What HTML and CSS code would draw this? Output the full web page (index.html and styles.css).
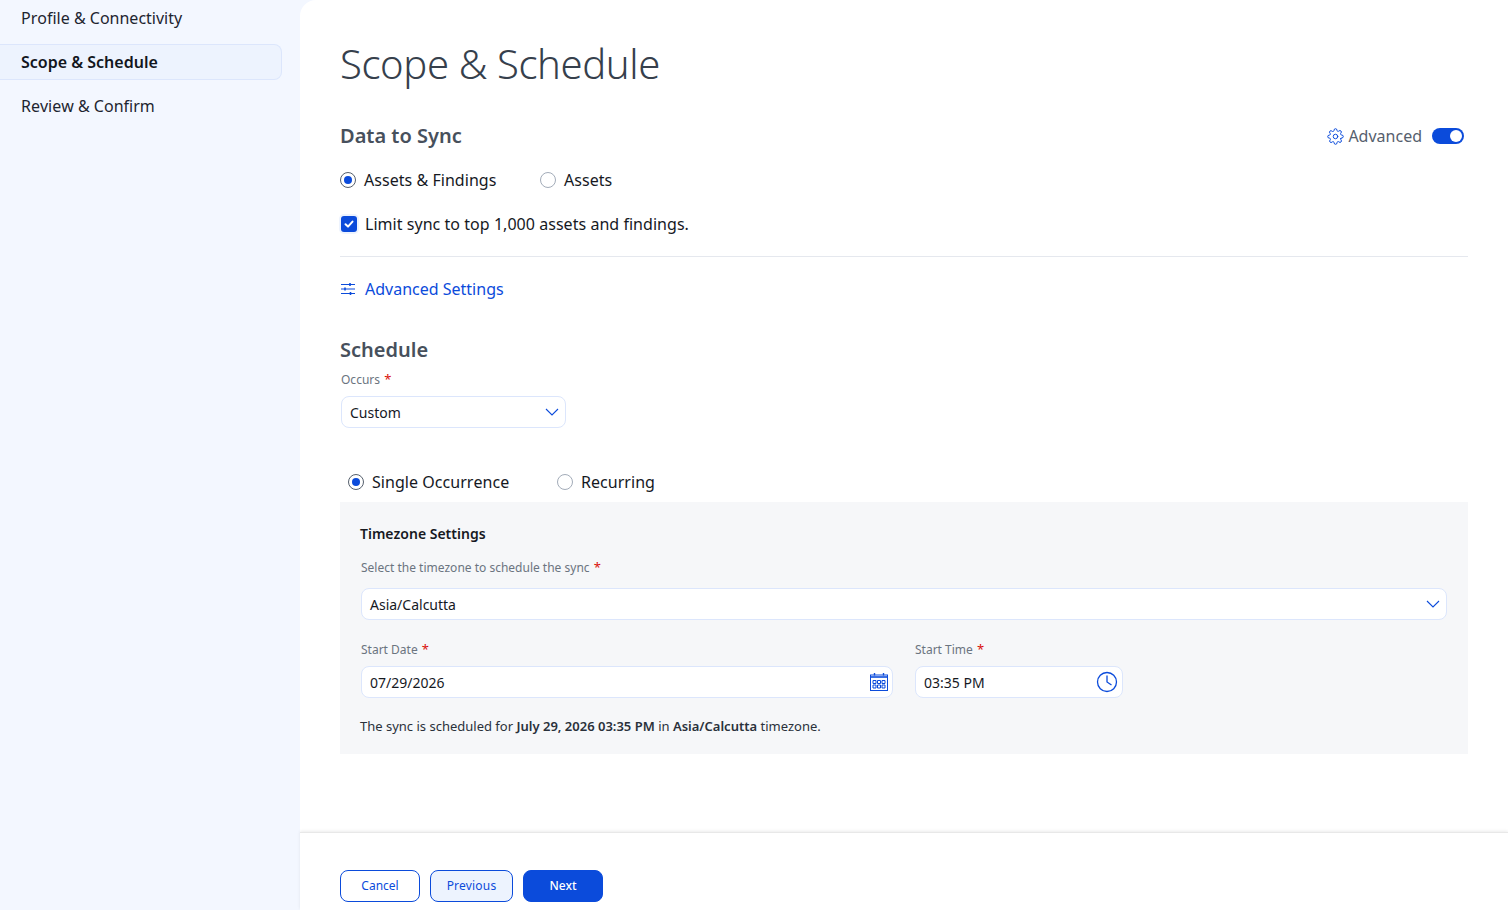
FILE: index.html
```html
<!DOCTYPE html>
<html lang="en">
<head>
    <meta charset="UTF-8">
    <meta name="viewport" content="width=device-width, initial-scale=1.0">
    <title>Scope &amp; Schedule</title>
    <link rel="stylesheet" href="styles.css">
</head>
<body>
    <div class="layout">
        <nav class="sidebar">
            <a class="step">Profile &amp; Connectivity</a>
            <a class="step active">Scope &amp; Schedule</a>
            <a class="step">Review &amp; Confirm</a>
        </nav>
        <main class="main">
            <div class="content">
                <h1>Scope &amp; Schedule</h1>

                <div class="section-head">
                    <h2>Data to Sync</h2>
                    <div class="advanced">
                        <svg class="gear" width="17" height="17" viewBox="0 0 24 24" fill="none" stroke="#0b4bdb" stroke-width="1.4" stroke-linecap="round" stroke-linejoin="round">
                            <circle cx="12" cy="12" r="3.2"></circle>
                            <path d="M19.4 15a1.65 1.65 0 0 0 .33 1.82l.06.06a2 2 0 1 1-2.83 2.83l-.06-.06a1.65 1.65 0 0 0-2.8 1.17V21a2 2 0 1 1-4 0v-.09a1.65 1.65 0 0 0-2.88-1.11l-.06.06a2 2 0 1 1-2.83-2.83l.06-.06a1.65 1.65 0 0 0-1.17-2.8H3a2 2 0 1 1 0-4h.09a1.65 1.65 0 0 0 1.11-2.88l-.06-.06a2 2 0 1 1 2.83-2.83l.06.06a1.65 1.65 0 0 0 1.82.33H9a1.65 1.65 0 0 0 1-1.51V3a2 2 0 1 1 4 0v.09a1.65 1.65 0 0 0 2.8 1.17l.06-.06a2 2 0 1 1 2.83 2.83l-.06.06a1.65 1.65 0 0 0-.33 1.82V9a1.65 1.65 0 0 0 1.51 1H21a2 2 0 1 1 0 4h-.09a1.65 1.65 0 0 0-1.51 1z"></path>
                        </svg>
                        <span>Advanced</span>
                        <span class="toggle"><span class="knob"></span></span>
                    </div>
                </div>

                <div class="radio-row">
                    <label class="radio-item wide"><span class="radio checked"></span>Assets &amp; Findings</label>
                    <label class="radio-item"><span class="radio"></span>Assets</label>
                </div>

                <label class="check-row">
                    <span class="check">
                        <svg width="12" height="12" viewBox="0 0 12 12" fill="none" stroke="#fff" stroke-width="2" stroke-linecap="round" stroke-linejoin="round"><path d="M2.5 6.3 5 8.6 9.5 3.6"></path></svg>
                    </span>
                    Limit sync to top 1,000 assets and findings.
                </label>

                <hr class="divider">

                <a class="adv-link">
                    <svg width="16" height="14" viewBox="0 0 16 14" fill="none" stroke="#0b4bdb" stroke-width="1.1">
                        <path d="M1 2.5h14M1 7h14M1 11.5h14"></path>
                        <path d="M10 1v3M5 5.5v3M10.5 10v3" stroke-width="1.6"></path>
                    </svg>
                    Advanced Settings
                </a>

                <h2 class="schedule-title">Schedule</h2>
                <div class="field-label occurs">Occurs <span class="req">*</span></div>
                <div class="select short">
                    <span>Custom</span>
                    <svg width="14" height="8" viewBox="0 0 14 8" fill="none" stroke="#0b4bdb" stroke-width="1.1"><path d="M1 1l6 6 6-6"></path></svg>
                </div>

                <div class="radio-row occur-type">
                    <label class="radio-item wide2"><span class="radio checked"></span>Single Occurrence</label>
                    <label class="radio-item"><span class="radio"></span>Recurring</label>
                </div>

                <section class="panel">
                    <h3>Timezone Settings</h3>
                    <div class="field-label tz-label">Select the timezone to schedule the sync <span class="req">*</span></div>
                    <div class="select tz-select">
                        <span>Asia/Calcutta</span>
                        <svg width="14" height="8" viewBox="0 0 14 8" fill="none" stroke="#0b4bdb" stroke-width="1.1"><path d="M1 1l6 6 6-6"></path></svg>
                    </div>
                    <div class="date-row">
                        <div class="date-col">
                            <div class="field-label">Start Date <span class="req">*</span></div>
                            <div class="select">
                                <span>07/29/2026</span>
                                <svg width="20" height="20" viewBox="0 0 20 20" fill="none" stroke="#0b4bdb" stroke-width="1">
                                    <rect x="1.5" y="3" width="17" height="15.5"></rect>
                                    <path d="M1.5 5h17" stroke-width="1.6"></path>
                                    <path d="M5.5 1v2.5M14.5 1v2.5" stroke-width="1.4"></path>
                                    <path d="M4 8.5h3v3H4zM8.5 8.5h3v3h-3zM13 8.5h3v3h-3zM4 13h3v3H4zM8.5 13h3v3h-3zM13 13h3v3h-3z"></path>
                                </svg>
                            </div>
                        </div>
                        <div class="time-col">
                            <div class="field-label">Start Time <span class="req">*</span></div>
                            <div class="select">
                                <span>03:35 PM</span>
                                <svg width="22" height="22" viewBox="0 0 22 22" fill="none" stroke="#0b4bdb" stroke-width="1.3">
                                    <circle cx="11" cy="11" r="9.5"></circle>
                                    <path d="M11 4.5V11l4.5 3"></path>
                                </svg>
                            </div>
                        </div>
                    </div>
                    <p class="summary">The sync is scheduled for <b>July 29, 2026 03:35 PM</b> in <b>Asia/Calcutta</b> timezone.</p>
                </section>
            </div>
            <footer class="footer">
                <button class="btn">Cancel</button>
                <button class="btn prev">Previous</button>
                <button class="btn next">Next</button>
            </footer>
        </main>
    </div>
</body>
</html>
```

FILE: styles.css
```css
* {
    box-sizing: border-box;
}

html, body {
    height: 100%;
}

body {
    margin: 0;
    font-family: "Noto Sans", sans-serif;
    font-size: 16px;
    color: #16191f;
    background-color: #f3f7ff;
    overflow: hidden;
    font-kerning: none;
}

.layout {
    display: flex;
    height: 910px;
}

.sidebar {
    width: 300px;
    flex-shrink: 0;
    display: flex;
    flex-direction: column;
    gap: 8px;
    padding-right: 18px;
}

.step {
    height: 36px;
    line-height: 36px;
    padding-left: 21px;
    font-size: 16px;
    color: #1e2530;
}

.step.active {
    font-weight: 600;
    color: #12161d;
    background-color: #edf3fe;
    border: 1px solid #dce6fc;
    border-left: none;
    border-radius: 0 8px 8px 0;
    line-height: 34px;
}

.main {
    flex: 1;
    background-color: #fff;
    border-top-left-radius: 16px;
    display: flex;
    flex-direction: column;
}

.content {
    height: 832px;
    padding: 0 40px;
}

h1 {
    margin: 0;
    padding-top: 35px;
    height: 112px;
    font-size: 40px;
    line-height: 58px;
    font-weight: 300;
    letter-spacing: -0.38px;
    color: #36404c;
}

h2 {
    margin: 0;
    font-size: 20px;
    line-height: 28px;
    font-weight: 600;
    color: #47505c;
}

.section-head {
    display: flex;
    justify-content: space-between;
    align-items: center;
    height: 48px;
}

.advanced {
    display: flex;
    align-items: center;
    color: #56606d;
    padding-right: 4px;
}

.gear {
    margin-right: 4px;
}

.toggle {
    display: block;
    width: 32px;
    height: 16px;
    margin-left: 10px;
    border-radius: 8px;
    background-color: #0b4bdb;
    position: relative;
}

.knob {
    position: absolute;
    top: 2px;
    right: 2px;
    width: 12px;
    height: 12px;
    border-radius: 50%;
    background-color: #fff;
}

.radio-row {
    display: flex;
    align-items: center;
    height: 40px;
}

.radio-item {
    display: flex;
    align-items: center;
    gap: 8px;
    letter-spacing: 0.04px;
}

.radio-item.wide {
    width: 200px;
}

.radio-item.wide2 {
    width: 209px;
}

.radio {
    width: 16px;
    height: 16px;
    border-radius: 50%;
    border: 1px solid #a3acb9;
    background-color: #fff;
    position: relative;
}

.radio.checked {
    border-color: #56606d;
}

.radio.checked::after {
    content: "";
    position: absolute;
    top: 3px;
    left: 3px;
    width: 8px;
    height: 8px;
    border-radius: 50%;
    background-color: #0b4bdb;
}

.check-row {
    display: flex;
    align-items: center;
    gap: 8px;
    height: 24px;
    margin-top: 12px;
    margin-left: 1px;
    letter-spacing: 0.04px;
}

.check {
    width: 16px;
    height: 16px;
    border-radius: 3px;
    background-color: #0b4bdb;
    box-shadow: 0 0 0 2px #edf3fe;
    display: flex;
    align-items: center;
    justify-content: center;
}

.divider {
    margin: 20px 0 0;
    border: none;
    border-top: 1px solid #e5e8ee;
}

.adv-link {
    display: flex;
    align-items: center;
    gap: 9px;
    height: 24px;
    margin-top: 20px;
    color: #0b4bdb;
}

.schedule-title {
    margin-top: 35px;
}

.field-label {
    font-size: 12px;
    line-height: 16px;
    color: #6b7480;
    margin-left: 1px;
}

.req {
    color: #d9100a;
    font-size: 13px;
    line-height: 14px;
    margin-left: 1px;
}

.occurs {
    margin-top: 8px;
}

.select {
    display: flex;
    align-items: center;
    justify-content: space-between;
    height: 32px;
    padding: 0 6px 0 8px;
    background-color: #fff;
    border: 1px solid #dce6fc;
    border-radius: 8px;
    font-size: 14px;
    color: #16191f;
}

.occurs + .select {
    margin-top: 8px;
    margin-left: 1px;
}

.select.short {
    width: 225px;
}

.occur-type {
    margin-top: 34px;
    margin-left: 8px;
}

.panel {
    background-color: #f6f7f9;
    height: 252px;
    padding: 20px;
}

h3 {
    margin: 0;
    font-size: 14px;
    line-height: 24px;
    font-weight: 600;
    color: #16191f;
}

.tz-label {
    margin-top: 14px;
}

.tz-select {
    margin: 12px 1px 0 1px;
}

.date-row {
    display: flex;
    gap: 22px;
    margin-top: 22px;
    margin-left: 1px;
}

.date-row .field-label {
    margin-left: 0;
}

.date-row .select {
    margin-top: 8px;
    padding-right: 3px;
}

.date-col {
    width: 532px;
}

.time-col {
    width: 208px;
}

.time-col .select {
    padding-right: 4px;
}

.summary {
    margin: 18px 0 0;
    font-size: 13px;
    line-height: 20px;
    color: #2a313b;
}

.summary b {
    font-weight: 600;
}

.footer {
    flex: 1;
    display: flex;
    align-items: flex-start;
    gap: 10px;
    padding: 37px 40px 0;
    border-top: 1px solid #e8e8e8;
    box-shadow: 0 -1px 3px rgba(0, 0, 0, 0.08);
}

.btn {
    height: 32px;
    width: 80px;
    padding-bottom: 2px;
    border: 1px solid #0b4bdb;
    border-radius: 8px;
    background-color: #fff;
    color: #0b4bdb;
    font-family: inherit;
    font-size: 12px;
    cursor: pointer;
}

.btn.prev {
    width: 83px;
    background-color: #edf3fe;
    letter-spacing: 0.2px;
}

.btn.next {
    background-color: #0b4bdb;
    color: #fff;
    font-weight: 500;
}
```
